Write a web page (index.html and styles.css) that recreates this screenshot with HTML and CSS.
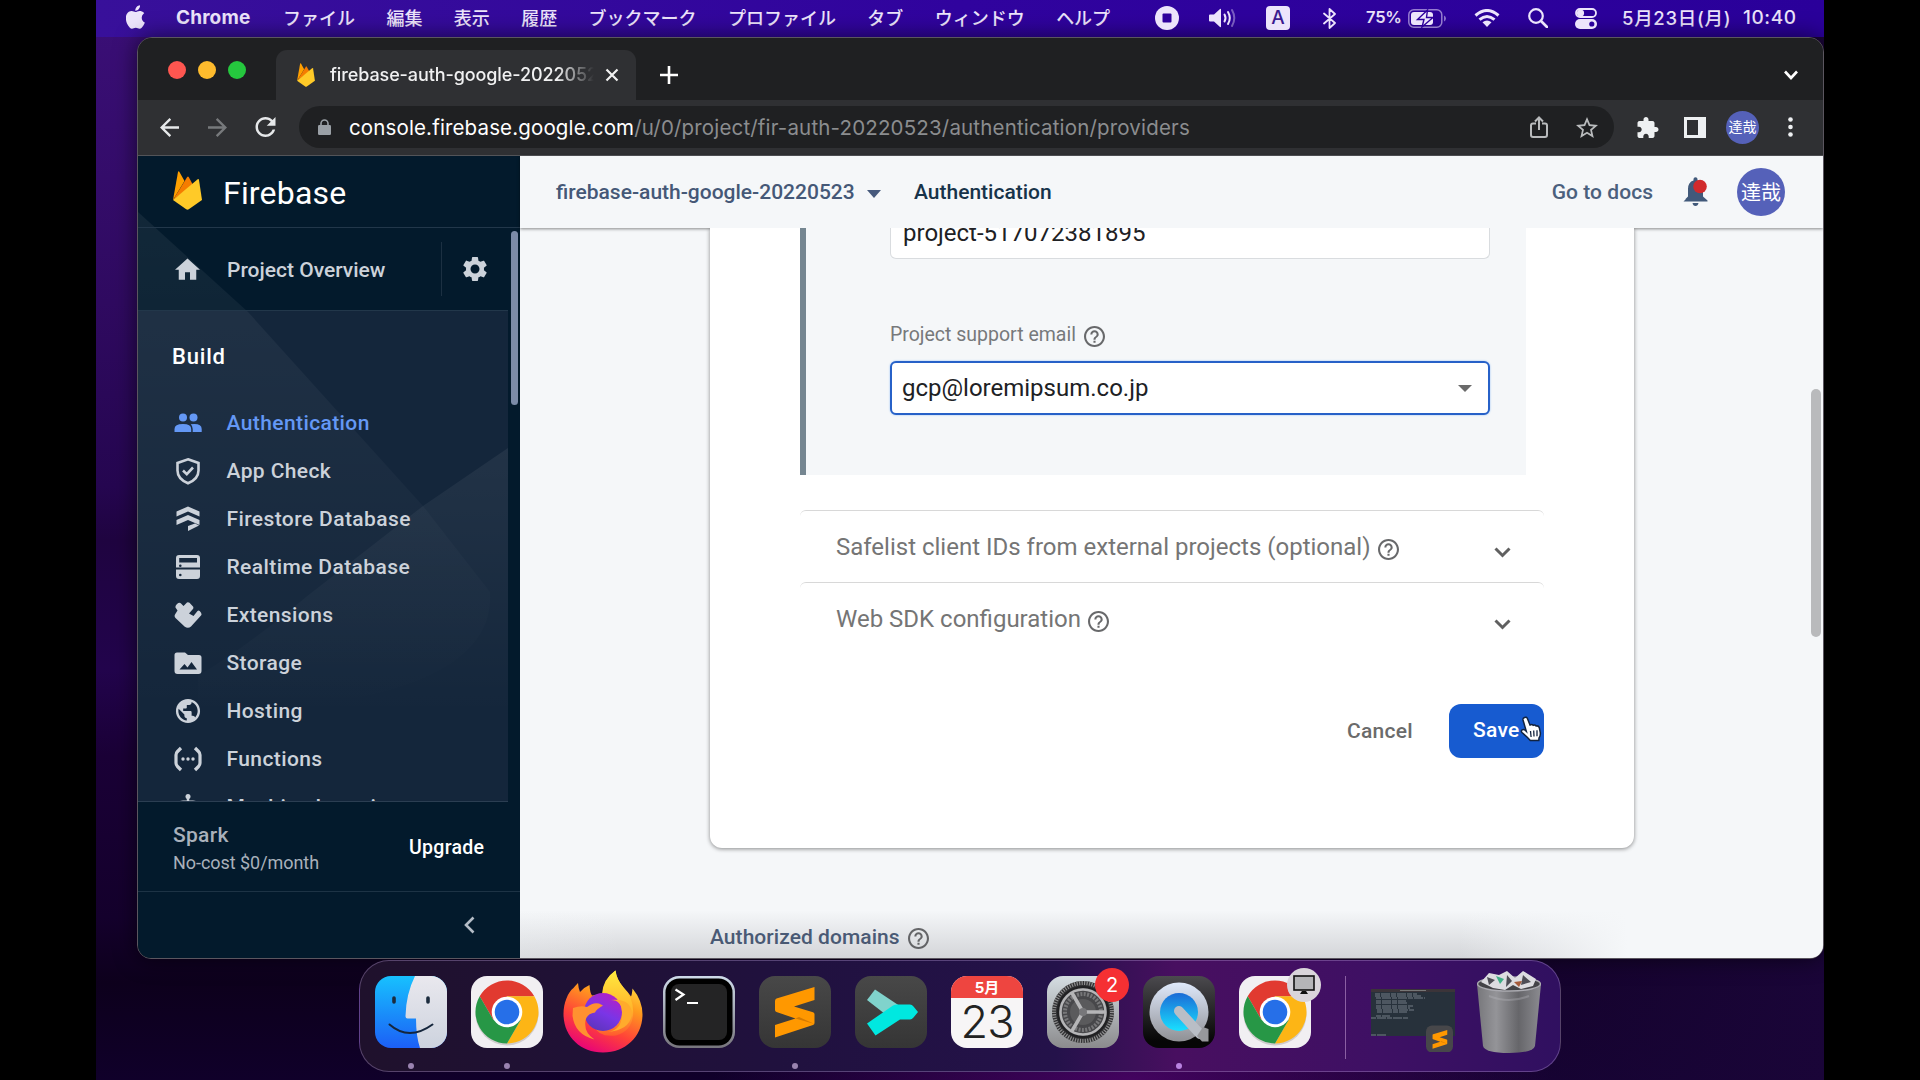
FILE: index.html
```html
<!DOCTYPE html>
<html lang="ja">
<head>
<meta charset="utf-8">
<title>Firebase console</title>
<link rel="stylesheet" href="styles.css">
</head>
<body>
<svg class="defs" width="0" height="0" aria-hidden="true">
  <defs>
    <linearGradient id="g-finder" x1="0" y1="0" x2="0" y2="1"><stop offset="0" stop-color="#17c1fe"/><stop offset="1" stop-color="#1c5ff6"/></linearGradient>
    <linearGradient id="g-finder-r" x1="0" y1="0" x2="0" y2="1"><stop offset="0" stop-color="#e9e8ee"/><stop offset="1" stop-color="#cdd3de"/></linearGradient>
    <linearGradient id="g-ff" x1=".75" y1="0" x2=".3" y2="1"><stop offset="0" stop-color="#fff04a"/><stop offset=".35" stop-color="#ff9a1e"/><stop offset=".68" stop-color="#ff4039"/><stop offset="1" stop-color="#e6007c"/></linearGradient>
    <linearGradient id="g-ff2" x1="0" y1="0" x2="0" y2="1"><stop offset="0" stop-color="#ffea3f"/><stop offset=".6" stop-color="#ffb52b"/><stop offset="1" stop-color="#ff5a2e"/></linearGradient>
    <linearGradient id="g-ff3" x1=".7" y1="0" x2=".2" y2="1"><stop offset="0" stop-color="#b420c8"/><stop offset=".5" stop-color="#7a35e6"/><stop offset="1" stop-color="#5a35b8"/></linearGradient>
    <linearGradient id="g-term" x1="0" y1="0" x2="0" y2="1"><stop offset="0" stop-color="#cfdcea"/><stop offset="1" stop-color="#77757c"/></linearGradient>
    <linearGradient id="g-dark" x1="0" y1="0" x2="0" y2="1"><stop offset="0" stop-color="#484848"/><stop offset="1" stop-color="#353535"/></linearGradient>
    <linearGradient id="g-pref" x1="0" y1="0" x2="0" y2="1"><stop offset="0" stop-color="#d5dde2"/><stop offset="1" stop-color="#8b8b8d"/></linearGradient>
    <linearGradient id="g-qt" x1="0" y1="0" x2="0" y2="1"><stop offset="0" stop-color="#4b4a4e"/><stop offset=".9" stop-color="#060606"/></linearGradient>
    <linearGradient id="g-qtr" x1="0" y1="0" x2="0" y2="1"><stop offset="0" stop-color="#dfe9fb"/><stop offset="1" stop-color="#8f9094"/></linearGradient>
    <linearGradient id="g-qtb" x1="0" y1="0" x2="0" y2="1"><stop offset="0" stop-color="#1b6bd6"/><stop offset="1" stop-color="#19e0ff"/></linearGradient>
    <linearGradient id="g-can" x1="0" y1="0" x2="1" y2="0"><stop offset="0" stop-color="#77777b"/><stop offset=".3" stop-color="#949498"/><stop offset=".65" stop-color="#66666a"/><stop offset="1" stop-color="#8b8b90"/></linearGradient>
    <symbol id="i-help" viewBox="2 2 20 20"><path d="M11 18h2v-2h-2v2zm1-16C6.48 2 2 6.48 2 12s4.48 10 10 10 10-4.48 10-10S17.52 2 12 2zm0 18c-4.41 0-8-3.59-8-8s3.59-8 8-8 8 3.59 8 8-3.59 8-8 8zm0-14c-2.21 0-4 1.79-4 4h2c0-1.1.9-2 2-2s2 .9 2 2c0 2-3 1.75-3 5h2c0-2.25 3-2.5 3-5 0-2.21-1.79-4-4-4z"/></symbol>
    <symbol id="i-down" viewBox="0 0 17 11"><path d="M1.5 1.5 8.500 8.500l7-7" fill="none" stroke="currentColor" stroke-width="3"/></symbol>
    <symbol id="i-firebase" viewBox="0 0 29 39">
      <path d="M0 29 5 .9Q5.500-.4 6.300.8L11.500 10z" fill="#ffa000"/>
      <path d="M0 29 14.200 6q.8-1.200 1.500 0L20 14z" fill="#f57c00"/>
      <path d="M0 29 24.400 8.500q1.300-1 1.600.6L29 29 15.800 38.300q-1.300.8-2.600 0z" fill="#ffca28"/>
    </symbol>
    <symbol id="i-chrome" viewBox="0 0 72 72">
      <rect width="72" height="72" rx="16" fill="#f1eff2"/>
      <circle cx="36" cy="38" r="31.500" fill="#b9b4b4" opacity=".6"/>
      <path d="M8.700 20.250a31.500 31.500 0 0 1 54.600 0H36L22.400 43.900z" fill="#e13a30"/>
      <path d="M63.300 20.250A31.500 31.500 0 0 1 36 67.500L49.600 43.900 36 36V20.250z" fill="#fdb515"/>
      <path d="M36 67.500A31.500 31.500 0 0 1 8.700 20.250L22.400 43.900 36 40l13.600 3.900z" fill="#279746"/>
      <circle cx="36" cy="36" r="15.300" fill="#fff"/><circle cx="36" cy="36" r="12.300" fill="#266fe8"/>
    </symbol>
    <symbol id="i-sublime" viewBox="0 0 40 51"><path d="M0 14Q0 12 1.500 11.500L39.500 0V13L19 19.500l19 5.800q1.500.5 1.500 2V36q0 1.500-1.500 2L0 50.500V38l20.500-6.500L1.500 25Q0 24.500 0 23z" fill="#ff9800"/><path d="M20.500 31.500 39.500 37 24 30z" fill="#d57a00"/></symbol>
  </defs>
</svg>

<div class="screen">
  <header class="menubar">
    <svg class="apple" viewBox="4 2 16.200 20"><path fill="currentColor" d="M18.710 19.500c-.83 1.240-1.710 2.450-3.050 2.470-1.340.03-1.770-.79-3.290-.79-1.530 0-2 .77-3.270.82-1.310.05-2.300-1.320-3.140-2.530C4.250 17 2.940 12.450 4.700 9.390c.87-1.520 2.430-2.480 4.120-2.510 1.280-.02 2.500.87 3.290.87.78 0 2.260-1.070 3.810-.91.65.03 2.470.26 3.640 1.980-.09.06-2.170 1.280-2.150 3.810.03 3.020 2.650 4.030 2.680 4.040-.03.07-.42 1.440-1.380 2.830M13 3.500c.73-.83 1.940-1.460 2.940-1.500.13 1.170-.34 2.350-1.040 3.190-.69.85-1.830 1.510-2.950 1.420-.15-1.150.41-2.350 1.050-3.110z"/></svg>
    <b class="appname">Chrome</b>
    <nav class="menus"><span>ファイル</span><span>編集</span><span>表示</span><span>履歴</span><span>ブックマーク</span><span>プロファイル</span><span>タブ</span><span>ウィンドウ</span><span>ヘルプ</span></nav>
    <div class="status">
      <svg class="s-rec" viewBox="0 0 24 24"><circle cx="12" cy="12" r="12" fill="currentColor"/><rect x="7.500" y="7.500" width="9" height="9" rx="1" fill="#2e009c"/></svg>
      <svg class="s-vol" viewBox="0 0 28 20"><path d="M0 7.500Q0 6.500 1 6.500H5L11 1q1-.6 1 .5v17q0 1-1 .5L5 13.500H1q-1 0-1-1z" fill="currentColor"/><path d="M15.500 6.500q2 3.500 0 7M19 4q3.600 6 0 12" fill="none" stroke="currentColor" stroke-width="2" stroke-linecap="round"/><path d="M23 2q4.600 8 0 16" fill="none" stroke="currentColor" stroke-width="2" stroke-linecap="round" opacity=".4"/></svg>
      <span class="s-ime">A</span>
      <svg class="s-bt" viewBox="0 0 13 21"><path d="M1 5.500 12 15 6.500 20V1L12 6 1 15.500" fill="none" stroke="currentColor" stroke-width="1.800" stroke-linejoin="round" stroke-linecap="round"/></svg>
      <span class="s-pct">75%</span>
      <svg class="s-bat" viewBox="0 0 38 19"><rect x=".8" y=".8" width="33" height="17.400" rx="5" fill="none" stroke="currentColor" stroke-width="1.500" opacity=".55"/><path d="M36 6.500q2 .8 2 3t-2 3z" fill="currentColor" opacity=".5"/><rect x="3" y="3" width="22" height="13" rx="3" fill="currentColor"/><path d="M19.500 1 9.500 10.500h6.500l-2 7.500L25 8.500h-6.500z" fill="currentColor" stroke="#2e009c" stroke-width="1.400"/></svg>
      <svg class="s-wifi" viewBox="0 0 26 18"><path d="M1.500 6.500q11.500-10 23 0M5.500 10.700q7.500-6.500 15 0" fill="none" stroke="currentColor" stroke-width="3"/><path d="M8.500 13.300q4.500-3.600 9 0L13 18z" fill="currentColor"/></svg>
      <svg class="s-find" viewBox="0 0 20 20"><circle cx="8" cy="8" r="6.800" fill="none" stroke="currentColor" stroke-width="2.200"/><path d="m13 13 6 6" stroke="currentColor" stroke-width="2.600" stroke-linecap="round"/></svg>
      <svg class="s-cc" viewBox="0 0 22 21"><rect x="1" y="1" width="20" height="8" rx="4" fill="none" stroke="currentColor" stroke-width="1.800"/><circle cx="5.500" cy="5" r="3.600" fill="currentColor"/><rect y="11" width="22" height="10" rx="5" fill="currentColor"/><circle cx="16.800" cy="16" r="2.600" fill="#2b009c"/></svg>
      <span class="s-date">5月23日(月)</span><span class="s-time">10:40</span>
    </div>
  </header>

  <main class="window">
    <div class="tabstrip">
      <div class="lights"><i class="red"></i><i class="amber"></i><i class="green"></i></div>
      <div class="tab">
        <svg class="fav"><use href="#i-firebase"/></svg>
        <span class="tab-title">firebase-auth-google-20220523</span>
        <svg class="close" viewBox="0 0 14 14"><path d="m1.500 1.500 11 11m0-11-11 11" stroke="#f1f1f1" stroke-width="2.200"/></svg>
      </div>
      <svg class="plus" viewBox="0 0 18 18"><path d="M9 0v18M0 9h18" stroke="#fff" stroke-width="2.600"/></svg>
      <svg class="tabs-more" viewBox="0 0 14 10"><path d="m1 1.500 6 6.500 6-6.500" fill="none" stroke="#fff" stroke-width="2.600"/></svg>
    </div>
    <div class="toolbar">
      <svg class="t-back" viewBox="4 4 16 16"><path fill="#e6e8ea" d="M20 11H7.830l5.590-5.590L12 4l-8 8 8 8 1.410-1.410L7.830 13H20v-2z"/></svg>
      <svg class="t-fwd" viewBox="4 4 16 16"><path fill="#77797c" d="m12 4-1.410 1.410L16.170 11H4v2h12.170l-5.580 5.590L12 20l8-8z"/></svg>
      <svg class="t-reload" viewBox="4 4 16 16"><path fill="#e6e8ea" d="M17.650 6.350C16.200 4.900 14.210 4 12 4c-4.420 0-7.990 3.580-7.990 8s3.570 8 7.990 8c3.730 0 6.840-2.550 7.730-6h-2.080c-.82 2.330-3.040 4-5.650 4-3.310 0-6-2.690-6-6s2.690-6 6-6c1.660 0 3.140.69 4.220 1.780L13 11h7V4l-2.350 2.350z"/></svg>
      <div class="omnibox">
        <svg class="lock" viewBox="0 0 13 16"><path d="M3 7V4.500a3.500 3.500 0 0 1 7 0V7" fill="none" stroke="#9aa0a6" stroke-width="1.600"/><rect y="6" width="13" height="10" rx="1.300" fill="#9aa0a6"/></svg>
        <span class="url"><span class="host">console.firebase.google.com</span><span class="path">/u/0/project/fir-auth-20220523/authentication/providers</span></span>
        <svg class="share" viewBox="0 0 18 22"><path d="M6 7.500H3q-2 0-2 2V19q0 2 2 2h12q2 0 2-2V9.500q0-2-2-2h-3M9 14V1.500M5 5.500l4-4 4 4" fill="none" stroke="#b9bbbd" stroke-width="2"/></svg>
        <svg class="star" viewBox="2 2 20 19"><path fill="#b9bbbd" d="M22 9.240l-7.190-.62L12 2 9.190 8.630 2 9.240l5.460 4.730L5.820 21 12 17.270 18.180 21l-1.630-7.030L22 9.240zM12 15.400l-3.760 2.270 1-4.280-3.320-2.880 4.380-.38L12 6.100l1.710 4.040 4.380.38-3.320 2.880 1 4.280L12 15.400z"/></svg>
      </div>
      <svg class="puzzle" viewBox="2 1 21 21"><path fill="#eef0f2" d="M20.500 11H19V7c0-1.100-.9-2-2-2h-4V3.500C13 2.120 11.880 1 10.500 1S8 2.120 8 3.500V5H4c-1.100 0-1.990.9-1.990 2v3.800H3.500c1.490 0 2.700 1.210 2.700 2.700s-1.210 2.700-2.700 2.700H2V20c0 1.100.9 2 2 2h3.800v-1.500c0-1.490 1.210-2.700 2.700-2.700 1.490 0 2.700 1.210 2.700 2.700V22H17c1.100 0 2-.9 2-2v-4h1.500c1.380 0 2.500-1.120 2.500-2.500S21.880 11 20.500 11z"/></svg>
      <svg class="panel" viewBox="0 0 22 21"><path fill="#eef0f2" fill-rule="evenodd" d="M0 0h22v21H0zM3 3v15h11V3z"/></svg>
      <span class="avatar small">達哉</span>
      <svg class="dots" viewBox="0 0 5 20"><g fill="#eef0f2"><circle cx="2.500" cy="2.500" r="2.300"/><circle cx="2.500" cy="10" r="2.300"/><circle cx="2.500" cy="17.500" r="2.300"/></g></svg>
    </div>

    <div class="page">
      <aside class="sidebar">
        <svg class="facets" viewBox="0 0 382 802" preserveAspectRatio="none">
          <defs><linearGradient id="g-facet" x1="0" y1="0" x2="0" y2="1"><stop offset="0" stop-color="#fff" stop-opacity=".06"/><stop offset="1" stop-color="#fff" stop-opacity="0"/></linearGradient></defs>
          <path d="M0 155H370V645H0z" fill="#14263b"/>
          <path d="M0 56 110 156 285 350 352 436Q360 560 0 560z" fill="url(#g-facet)"/>
          <path d="M370 292 285 350 168 441Q110 490 60 520V560H370z" fill="url(#g-facet)"/>
        </svg>
        <div class="brand"><svg class="flame"><use href="#i-firebase"/></svg><span>Firebase</span></div>
        <div class="overview">
          <svg class="home" viewBox="2 3 20 17"><path d="M10 20v-6h4v6h5v-8h3L12 3 2 12h3v8z"/></svg>
          <span>Project Overview</span>
          <i class="vline"></i>
          <svg class="gear" viewBox="2.500 2.400 19 19.200"><path d="M19.140 12.940c.04-.3.06-.61.06-.94 0-.32-.02-.64-.07-.94l2.030-1.580c.18-.14.23-.41.12-.61l-1.920-3.320c-.12-.22-.37-.29-.59-.22l-2.390.96c-.5-.38-1.030-.7-1.620-.94l-.36-2.540c-.04-.24-.24-.41-.48-.41h-3.840c-.24 0-.43.17-.47.41l-.36 2.540c-.59.24-1.130.57-1.620.94l-2.390-.96c-.22-.08-.47 0-.59.22L2.740 8.870c-.12.21-.08.47.12.61l2.030 1.580c-.05.3-.09.63-.09.94s.02.64.07.94l-2.030 1.580c-.18.14-.23.41-.12.61l1.920 3.320c.12.22.37.29.59.22l2.390-.96c.5.38 1.030.7 1.620.94l.36 2.540c.05.24.24.41.48.41h3.840c.24 0 .44-.17.47-.41l.36-2.540c.59-.24 1.130-.56 1.620-.94l2.390.96c.22.08.47 0 .59-.22l1.920-3.320c.12-.22.07-.47-.12-.61l-2.010-1.580zM12 15.600c-1.980 0-3.600-1.620-3.600-3.600s1.620-3.600 3.600-3.600 3.600 1.620 3.600 3.600-1.620 3.600-3.600 3.600z"/></svg>
        </div>
        <div class="navlist">
          <h2>Build</h2>
          <a class="active"><svg viewBox="0 0 28 28"><g><circle cx="9" cy="8.500" r="4"/><circle cx="19.500" cy="8.500" r="4"/><path d="M.5 23v-3q0-5 8.500-5 8.200 0 8.200 5v3zM18.700 23v-3q0-3-2-4.700 11-1.300 11 4.700v3z"/></g></svg><span>Authentication</span></a>
          <a><svg viewBox="0 0 28 28"><path d="M14 2.300 24.500 6v7.500Q24.500 22 14 26.300 3.500 22 3.500 13.500V6z" fill="none" stroke="currentColor" stroke-width="2.600"/><path d="m9 13.500 3.800 3.600L19 10.500" fill="none" stroke="currentColor" stroke-width="2.600"/></svg><span>App Check</span></a>
          <a><svg viewBox="0 0 28 28"><path d="M14 1.500 25.500 6.500V11.500L14 6.500 2.500 11.500V6.500zM14 10 25.500 15v5L14 15 2.500 20V15zM14 21l7-2.500 4 2L14 26z"/></svg><span>Firestore Database</span></a>
          <a><svg viewBox="0 0 28 28"><path fill-rule="evenodd" d="M5 2h18q3 0 3 3V14.500H2V5q0-3 3-3zM5.200 5v4.500H23V5zM5 12.800a1.100 1.100 0 1 0 2.600 0 1.100 1.100 0 1 0-2.600 0zM2 16.500H26V23q0 3-3 3H5q-3 0-3-3zM5 22a1.300 1.300 0 1 0 2.600 0A1.300 1.300 0 1 0 5 22z"/></svg><span>Realtime Database</span></a>
          <a><svg viewBox="0 0 28 28"><path d="M1 13.500 3.500 9.500 1.500 6.500Q1 5 3 3 5.500 1 7 2.500L9.500 5 12 2.500Q13.500.5 15.500 1.800L19 5.500q1 1.500-.5 3L15 12.500 19.500 15l4-5q1-.8 2.200 0Q28.500 13 27 14.500L17 25.500q-3 2.500-6.500 0L1.500 17Q0 15.500 1 13.500z"/></svg><span>Extensions</span></a>
          <a><svg viewBox="0 0 28 28"><path fill-rule="evenodd" d="M3 3.500H11L14 6H25q2.500 0 2.500 2.500V22Q27.500 25 24.500 25H3.500Q.5 25 .5 22V6Q.5 3.500 3 3.500zM5.500 20.500H23L17.500 13l-4 5.500L10.500 15z"/></svg><span>Storage</span></a>
          <a><svg viewBox=".4 .4 23.200 23.200"><path d="M12 2C6.480 2 2 6.480 2 12s4.480 10 10 10 10-4.480 10-10S17.520 2 12 2zm-1 17.930c-3.950-.49-7-3.850-7-7.930 0-.62.08-1.210.21-1.790L9 15v1c0 1.100.9 2 2 2v1.930zm6.900-2.540c-.26-.81-1-1.390-1.900-1.390h-1v-3c0-.55-.45-1-1-1H8v-2h2c.55 0 1-.45 1-1V7h2c1.100 0 2-.9 2-2v-.41c2.930 1.190 5 4.060 5 7.410 0 2.080-.8 3.970-2.100 5.390z"/></svg><span>Hosting</span></a>
          <a><svg viewBox="0 0 28 28"><path d="M7 3 3.500 6.500Q2 8 2 10v8q0 2 1.500 3.500L7 25M21 3l3.500 3.500Q26 8 26 10v8q0 2-1.500 3.500L21 25" fill="none" stroke="currentColor" stroke-width="3.200"/><circle cx="9" cy="14" r="1.700"/><circle cx="14" cy="14" r="1.700"/><circle cx="19" cy="14" r="1.700"/></svg><span>Functions</span></a>
          <a><svg viewBox="0 0 28 28"><circle cx="14" cy="3.500" r="2.500"/><path d="M12.800 4h2.400v6h-2.400zM3 12q1-4.500 6-4.500H19q5 0 6 4.500v10H3z"/></svg><span>Machine Learning</span></a>
        </div>
        <div class="plan"><div><p class="plan-name">Spark</p><p class="plan-cost">No-cost $0/month</p></div><b>Upgrade</b></div>
        <div class="collapse"><svg viewBox="0 0 11 18"><path d="M9.500 1.500 2 9l7.500 7.500" fill="none" stroke="#b4bcc6" stroke-width="2.600"/></svg></div>
        <i class="side-scroll"></i>
      </aside>

      <section class="content">
        <div class="crumbs">
          <span class="project">firebase-auth-google-20220523</span>
          <svg class="caret" viewBox="0 0 14 8"><path d="M0 0h14L7 8z" fill="#46597c"/></svg>
          <span class="current">Authentication</span>
          <span class="docs">Go to docs</span>
          <svg class="bell" viewBox="0 0 25 30"><path d="M2.500 24.500V22L5 19.500V12q0-7 5.500-8.500V2q0-1.800 2-1.800t2 1.800v1.500Q20 5 20 12v7.500l4.500 4v1H.5l2-2zM9.500 26h6q-.5 3-3 3t-3-3z" fill="#41597a"/><circle cx="17" cy="9.500" r="6.800" fill="#d12a2c"/></svg>
          <span class="avatar">達哉</span>
        </div>
        <div class="scroller">
          <div class="card">
            <div class="inner">
              <div class="field plain">project-517072381895</div>
              <div class="label">Project support email <svg class="help"><use href="#i-help"/></svg></div>
              <div class="field focus"><span>gcp@loremipsum.co.jp</span><svg class="caret" viewBox="0 0 14 7"><path d="M0 0h14L7 7z" fill="#6a6a6a"/></svg></div>
            </div>
            <div class="accordion"><span class="safelist">Safelist client IDs from external projects (optional)</span><svg class="help"><use href="#i-help"/></svg><svg class="down"><use href="#i-down"/></svg></div>
            <div class="accordion"><span class="websdk">Web SDK configuration</span><svg class="help"><use href="#i-help"/></svg><svg class="down"><use href="#i-down"/></svg></div>
            <div class="actions"><span class="cancel">Cancel</span><span class="save">Save
              <svg class="cursor" viewBox="0 0 22 26"><path d="M4.500 1.500q2-1 3 1.200L10 9q2-1.200 3.200.3 1.700-.8 2.900.7 2.300-.6 3.200 1.600l1 5q.4 3-1.300 5.400l-.2 2.500h-8.500L7.500 21.500 2 16.500q-1.300-1.600.2-2.600t3 .4l1.100 1L3 4q-.3-1.700 1.500-2.500z" fill="#fff" stroke="#12233f" stroke-width="1.500"/><path d="m10.500 15 .6 6M13.700 14.500l.3 6M17 14.200v6" stroke="#12233f" stroke-width="1.300"/></svg></span></div>
          </div>
          <div class="domains">Authorized domains <svg class="help"><use href="#i-help"/></svg></div>
          <i class="page-scroll"></i>
        </div>
      </section>
    </div>
  </main>

  <footer class="dock">
    <div class="app running"><svg viewBox="0 0 72 72"><clipPath id="c-f"><rect width="72" height="72" rx="16"/></clipPath><g clip-path="url(#c-f)"><path fill="url(#g-finder)" d="M0 0h72v72H0z"/><path fill="url(#g-finder-r)" d="M40 0Q31 18 30.500 40q0 2.500 2 2.500H41Q41 60 45 72H72V0z"/><path d="M14.500 48.500Q34 65.500 57.500 48.500" fill="none" stroke="#15263c" stroke-width="2" stroke-linecap="round"/><path d="M19 22v4M53 22v4" stroke="#1b2b3d" stroke-width="3.600" stroke-linecap="round"/></g></svg></div>
    <div class="app running"><svg><use href="#i-chrome"/></svg></div>
    <div class="app"><svg class="firefox" viewBox="0 0 80 83"><path d="M40 82.500C17 82.500.5 66 .5 44 .5 33 5 22 10.500 18q2-2.500 4.500-5 .5 6 2 9 4.500-5 9.500-7 .5 8 2.500 10.500L40 24q0-14 12.500-23.500 1 9 8 17 4 4 7.500 9 1-2 1.500-8 10 12 10 26C79.500 66 63 82.500 40 82.500z" fill="url(#g-ff)"/><path d="M39 24Q40 9 52.500.5q1 9 8 17 11 12 9.500 28-2 16-17 20-18 2-22-10l20-8z" fill="url(#g-ff2)"/><circle cx="40" cy="42" r="19" fill="url(#g-ff3)"/><path d="M10 38q8-3 14-1 6-5 12-3.500l4 2q-7 4-8 7-8 1-9.500 8-2 12 9 19-20-5-22-24z" fill="#ff9130"/><path d="M48 30q12 0 11 16-1 14-14 16 22-2 24-18Q68 28 48 30z" fill="#ffab2c"/></svg></div>
    <div class="app"><svg viewBox="0 0 72 72"><rect width="72" height="72" rx="16" fill="url(#g-term)"/><rect x="2.500" y="2.500" width="67" height="67" rx="14" fill="#000"/><rect x="8" y="8" width="56" height="56" rx="8" fill="#242425"/><path d="m12.500 13.500 8 5-8 5.500M24 27h11" fill="none" stroke="#fff" stroke-width="2.200"/></svg></div>
    <div class="app running"><svg viewBox="0 0 72 72"><rect width="72" height="72" rx="16" fill="url(#g-dark)"/><use href="#i-sublime" x="16" y="11" width="40" height="51"/></svg></div>
    <div class="app"><svg viewBox="0 0 72 72"><rect width="72" height="72" rx="16" fill="url(#g-dark)"/><path d="m20 13.500 24 16L30 38 12 24z" fill="#80d3cc"/><path d="M12 47.500 38 29.500Q40 28.500 42 28.500H55Q57 28.500 58.500 30.500L63 36 58.500 41.500Q57 43.500 55 43.500H45L20.500 59.500z" fill="#00e8e0"/></svg></div>
    <div class="app calendar"><span class="month">5月</span><span class="day">23</span></div>
    <div class="app"><svg viewBox="0 0 72 72"><rect width="72" height="72" rx="16" fill="url(#g-pref)"/><circle cx="36" cy="36" r="31" fill="#303032"/><circle cx="36" cy="36" r="29" fill="none" stroke="#8f8f90" stroke-width="4" stroke-dasharray="1.200 1.300"/><circle cx="36" cy="36" r="25" fill="#47474a" stroke="#202022" stroke-width="2"/><circle cx="36" cy="36" r="18" fill="none" stroke="#777779" stroke-width="4" stroke-dasharray="2 1.400"/><circle cx="36" cy="36" r="13" fill="#5a5a5c"/><circle cx="36" cy="36" r="22.500" fill="none" stroke="#b5b5b7" stroke-width="2.500"/><path d="M36 36H58M36 36 25 17M36 36 25 55" stroke="#b5b5b7" stroke-width="3.500"/><circle cx="36" cy="36" r="4" fill="#77777a"/></svg><span class="badge">2</span></div>
    <div class="app running bright"><svg viewBox="0 0 72 72"><rect width="72" height="72" rx="16" fill="url(#g-qt)"/><circle cx="36" cy="36" r="29.500" fill="url(#g-qtr)"/><circle cx="36" cy="36" r="19" fill="url(#g-qtb)"/><path d="M36 35 57 58" stroke="#b9bec6" stroke-width="10" stroke-linecap="round"/><path d="m54 60 5 5.500h6.500V53L60 51z" fill="#97989c"/></svg></div>
    <div class="app"><svg><use href="#i-chrome"/></svg><span class="badge screen-badge"><svg viewBox="0 0 22 20"><rect x="1" y="1" width="20" height="14" fill="#b5b5b8" stroke="#111" stroke-width="1.600"/><path d="M9 16h4l2 3H7z" fill="#111"/></svg></span></div>
    <i class="divider"></i>
    <div class="mini"><svg viewBox="0 0 84 63"><path d="M0 0h84v47H0z" fill="#27313b"/><path d="M0 0h84v3H0z" fill="#3b3439"/><path d="M29 1.500h26" stroke="#777" stroke-width="1"/><g stroke="#7d8790" stroke-width=".9" stroke-dasharray="5 1 9 1"><path d="M4 5h42M4 7h46M5 9h49M5 12h30M5 14h32M5 17h38M5 19h34M6 21h38M6 23h30M5 27h14M0 29h37M0 46h16"/></g><rect x="55" y="36.500" width="27" height="27" rx="6" fill="#47474a"/><use href="#i-sublime" x="61" y="41" width="16" height="19"/></svg></div>
    <div class="trash"><svg viewBox="0 0 64 84"><path d="M0 14h64L58 76Q56 83 32 83T6 76z" fill="url(#g-can)"/><ellipse cx="32" cy="14" rx="31.500" ry="7" fill="#434347" stroke="#aaaab0" stroke-width="1.500"/><path d="m4 12 8-9 10 2L30 1l8 7 8-7 13 8-3 7-12 3-8-4-8 5-12-2z" fill="#dcdce0"/><path d="m10 7 8 3-6 5zM30 5l5 6-6 6zM46 5l8 7-10 3z" fill="#4d4d55"/><path d="m19 6 8 3-4 5z" fill="#3fae86"/><path d="m37 12 8-1-3 6z" fill="#a45a3a"/><path d="M12 26q20 8 40 0" fill="none" stroke="#b8b8bd" stroke-width="2" opacity=".35"/></svg></div>
  </footer>
</div>
</body>
</html>
```
FILE: styles.css
```css
* { box-sizing: border-box; }
body { margin: 0; background: #000; font-family: Roboto, "Noto Sans CJK JP", sans-serif; overflow: hidden; }
svg { display: block; flex: none; fill: currentColor; }
.defs { position: absolute; }

.screen {
  width: 1728px; height: 1080px; margin-left: 96px; overflow: hidden;
  display: flex; flex-direction: column; align-items: center;
  background:
    radial-gradient(ellipse 420px 160px at 60% 100%, #43045f 0, rgba(67, 4, 95, 0) 100%),
    linear-gradient(90deg, rgba(24, 4, 54, 0) 60%, #1a0538 100%),
    linear-gradient(180deg, #3b0f78 0, #2f0a60 28%, #250650 45%, #1f0440 50%, #22044c 62%, #1a0036 70%, #14002c 85%, #0d001c 91%, #10002a 100%);
}

/* macOS menu bar */
.menubar { align-self: stretch; height: 37px; flex: none; display: flex; align-items: center; padding: 0 0 3px 30px; background: linear-gradient(90deg, #38109a, #30039e 50%, #2a009a); color: #ece4fb; font-size: 18px; font-family: Inter, "Noto Sans CJK JP", sans-serif; font-weight: 500; }
.apple { width: 19px; height: 24px; margin-right: 31px; }
.appname { width: 107px; font-weight: 700; font-size: 19px; letter-spacing: .15px; }
.menus { display: flex; gap: 31.400px; white-space: nowrap; width: 872px; flex: none; font-family: "Noto Sans CJK JP", sans-serif; }
.status { display: flex; align-items: center; white-space: nowrap; }
.status svg, .s-ime { position: relative; top: 1px; }
.s-rec { width: 24px; height: 24px; margin-right: 30px; }
.s-vol { width: 28px; height: 20px; margin-right: 29px; }
.s-ime { width: 24px; height: 24px; border-radius: 4px; background: #ece4fb; color: #3a1a90; text-align: center; font-size: 19px; line-height: 24px; margin-right: 33px; }
.s-bt { width: 13px; height: 21px; margin-right: 30px; }
.s-pct { width: 42px; font-size: 16.500px; letter-spacing: -.2px; font-weight: 600; }
.s-bat { width: 38px; height: 19px; margin-right: 28px; }
.s-wifi { width: 26px; height: 18px; margin-right: 28px; }
.s-find { width: 20px; height: 20px; margin-right: 27px; }
.s-cc { width: 22px; height: 21px; margin-right: 25px; }
.s-date { width: 121px; font-size: 18.500px; letter-spacing: .7px; }
.s-time { font-size: 19px; letter-spacing: .6px; }

/* browser window */
.window { align-self: stretch; margin: 0 0 0 41px; height: 922px; flex: none; display: flex; flex-direction: column; border: 1px solid #5b565f; border-radius: 15px 15px 14px 14px; overflow: hidden; background: #202124; box-shadow: 0 0 22px rgba(0, 0, 0, .6); }
.tabstrip { height: 62px; flex: none; display: flex; align-items: center; background: #1f2022; padding-right: 25px; }
.lights { display: flex; gap: 12px; width: 138px; padding-left: 30px; }
.lights i { width: 18px; height: 18px; border-radius: 50%; margin-top: 2px; }
.red { background: #fe5650; }
.amber { background: #febb2d; }
.green { background: #25c73e; }
.tab { width: 360px; height: 50px; align-self: flex-end; background: #2f3033; border-radius: 11px 11px 0 0; display: flex; align-items: center; padding-left: 21px; }
.fav { width: 18px; height: 24px; margin-right: 15px; }
.tab-title { width: 264px; overflow: hidden; white-space: nowrap; color: #f1f1f2; font: 500 18px Inter, sans-serif; letter-spacing: -.1px; -webkit-mask-image: linear-gradient(90deg, #000 86%, transparent); mask-image: linear-gradient(90deg, #000 86%, transparent); margin-right: 11px; position: relative; top: -1px; }
.close { width: 14px; height: 14px; }
.plus { width: 18px; height: 18px; margin: 12px 0 0 24px; }
.tabs-more { width: 14px; height: 10px; margin: 12px 0 0 auto; }
.toolbar { height: 56px; flex: none; display: flex; align-items: center; background: #2f3033; border-bottom: 1px solid #535458; padding: 0 29px 1px 22px; }
.t-back { width: 19px; height: 19px; margin-right: 29px; }
.t-fwd { width: 19px; height: 19px; margin-right: 28px; }
.t-reload { width: 21px; height: 20px; margin-right: 23px; }
.omnibox { width: 1315px; height: 42px; flex: none; border-radius: 21px; background: #1f2022; display: flex; align-items: center; padding: 0 16px 0 19px; }
.lock { width: 13px; height: 16px; margin-right: 18px; }
.url { flex: 1; white-space: nowrap; font-family: Inter, sans-serif; font-size: 20.500px; letter-spacing: .14px; color: #8b8d8f; }
.host { color: #fff; }
.path { letter-spacing: .17px; }
.share { width: 18px; height: 22px; margin-right: 28px; }
.star { width: 22px; height: 21px; }
.puzzle { width: 22px; height: 21px; margin-left: 23px; }
.panel { width: 22px; height: 21px; margin: 0 20px 0 25px; }
.avatar { width: 48px; height: 48px; flex: none; border-radius: 50%; background: #5561b9; color: #fff; text-align: center; font: 400 20px/47px "Noto Sans CJK JP", sans-serif; }
.avatar.small { width: 33px; height: 33px; font-size: 14px; line-height: 31px; }
.dots { width: 5px; height: 20px; margin-left: 29px; }

/* console */
.page { flex: 1; display: flex; min-height: 0; }
.sidebar { position: relative; width: 382px; flex: none; background: #031a2c; color: #ccd2da; display: flex; flex-direction: column; }
.sidebar > div { position: relative; }
.facets { position: absolute; left: 0; top: 0; width: 382px; height: 802px; }
.brand { height: 72px; flex: none; display: flex; align-items: center; padding-left: 35px; gap: 21px; border-bottom: 1px solid #22374a; color: #fff; font-size: 32px; }
.brand span { padding-top: 2px; letter-spacing: .2px; }
.flame { width: 29px; height: 39px; margin-top: -2px; }
.overview { height: 83px; width: 370px; flex: none; display: flex; align-items: center; padding-left: 37px; border-bottom: 1px solid #22374a; font-size: 21px; font-weight: 500; }
.overview span { width: 214px; margin-left: 27px; white-space: nowrap; padding-top: 1px; }
.home { width: 25px; height: 22px; }
.vline { width: 1px; height: 54px; background: #1c3042; margin-right: 21px; }
.gear { width: 24px; height: 24px; }
.navlist { width: 370px; height: 491px; flex: none; overflow: hidden; border-bottom: 1px solid #2b3e52; }
.navlist h2 { margin: 0; height: 88px; padding: 2px 0 0 34px; font-size: 22px; line-height: 87px; font-weight: 500; letter-spacing: .8px; color: #fff; }
.navlist a { height: 48px; display: flex; align-items: center; gap: 25px; padding-left: 35.500px; font-size: 21px; font-weight: 500; letter-spacing: .4px; white-space: nowrap; }
.navlist a svg { width: 28px; height: 28px; }
.navlist .active { color: #6498f5; }
.plan { height: 90px; flex: none; display: flex; align-items: center; padding: 2px 0 0 35px; border-bottom: 1px solid #1d3345; }
.plan > div { width: 236px; }
.plan p { margin: 0; color: #a9b1bb; }
.plan .plan-name { font-size: 21px; line-height: 29px; letter-spacing: .3px; font-weight: 500; }
.plan .plan-cost { font-size: 18px; line-height: 25px; letter-spacing: -.05px; }
.plan b { font-size: 19.500px; font-weight: 500; color: #fff; letter-spacing: .3px; }
.collapse { flex: 1; display: flex; align-items: center; padding-left: 326px; }
.collapse svg { width: 11px; height: 18px; }
.side-scroll { position: absolute; left: 373px; top: 75px; width: 7px; height: 174px; border-radius: 4px; background: #7b8ba8; }

.content { position: relative; flex: 1; display: flex; flex-direction: column; background: #f5f7f9; }
.content::after { content: ""; position: absolute; left: 0; right: 0; bottom: 0; height: 48px; pointer-events: none; background: linear-gradient(90deg, rgba(245, 247, 249, .2) 0, transparent 8%, transparent 72%, #f5f7f9 85%), linear-gradient(rgba(60, 60, 70, 0), rgba(60, 60, 70, .18)); }
.crumbs { height: 72px; flex: none; display: flex; align-items: center; padding: 0 38px 0 36px; font-size: 21px; font-weight: 500; color: #455877; box-shadow: 0 1px 3px rgba(0, 0, 0, .45); position: relative; background: #f5f7f9; white-space: nowrap; }
.project { width: 311px; }
.crumbs .caret { width: 14px; height: 8px; margin: 4px 33px 0 0; }
.current { color: #17334a; }
.docs { margin-left: auto; margin-right: 30px; color: #4b607d; letter-spacing: .05px; }
.bell { width: 25px; height: 30px; margin-right: 29px; }
.scroller { position: relative; flex: 1; padding-left: 190px; overflow: hidden; }
.card { width: 924px; height: 620px; padding: 0 90px; background: #fff; border-radius: 0 0 12px 12px; box-shadow: 0 1px 4px rgba(0, 0, 0, .45); }
.inner { width: 726px; height: 247px; background: #f5f7f9; border-left: 6px solid #758691; padding-left: 84px; margin-bottom: 35px; }
.field { width: 600px; background: #fff; border: 1px solid #d9dcdf; font-size: 24px; color: #202124; white-space: nowrap; }
.plain { height: 31px; border-top: 0; border-radius: 0 0 6px 6px; line-height: 11px; padding-left: 12px; }
.label { display: flex; align-items: center; gap: 8px; height: 24px; margin: 65px 0 13px; font-size: 19.500px; color: #77797b; white-space: nowrap; padding-bottom: 3px; }
.help { width: 21px; height: 21px; color: #68696b; }
.label .help, .domains .help { margin-top: 3px; }
.focus { height: 54px; border: 2.500px solid #2761c8; border-radius: 6px; display: flex; align-items: center; justify-content: space-between; padding: 0 16px 0 10px; box-shadow: 0 0 2px #8ab8f5; }
.focus .caret { width: 14px; height: 7px; }
.accordion { width: 744px; height: 72px; border-top: 1.500px solid #d8d8d8; border-radius: 6px; display: flex; align-items: center; gap: 7px; padding: 1px 33px 0 36px; font-size: 24px; color: #757575; }
.down { width: 17px; height: 11px; margin-left: auto; margin-top: 11px; color: #606060; }
.accordion .help { margin-top: 4px; }
.actions { width: 744px; display: flex; justify-content: flex-end; align-items: center; margin-top: 50px; font-size: 21px; font-weight: 500; }
.cancel { color: #6b6b6b; margin-right: 36px; letter-spacing: .3px; margin-top: -1px; }
.save { position: relative; width: 95px; height: 54px; border-radius: 12px; background: #175bd0; color: #fff; line-height: 53px; padding-left: 24px; letter-spacing: .3px; }
.cursor { position: absolute; left: 71px; top: 12px; width: 22px; height: 26px; }
.domains { display: flex; align-items: center; gap: 8px; height: 30px; margin-top: 74px; font-size: 21px; font-weight: 500; color: #4b5d7a; letter-spacing: .05px; white-space: nowrap; }
.page-scroll { position: absolute; right: 2px; top: 161px; width: 10px; height: 248px; border-radius: 5px; background: #b9babc; }

/* dock */
.dock { width: 1202px; height: 112px; margin-top: 1px; flex: none; display: flex; gap: 24px; padding: 15px 16px 0 15px; border: 1px solid rgba(190, 160, 220, .35); border-radius: 30px; background: linear-gradient(90deg, #1f112c, #20113e 35%, #24124a 58%, #480f60 68%, #3e1064 85%, #301060); }
.app { position: relative; width: 72px; height: 72px; flex: none; }
.app > svg { width: 72px; height: 72px; }
.app > .firefox { width: 80px; height: 83px; margin: -6px -4px; }
.running::after { content: ""; position: absolute; left: 33px; top: 87px; width: 6px; height: 6px; border-radius: 50%; background: #9a83b0; }
.bright::after { background: #b983e0; }
.calendar { border-radius: 16px; overflow: hidden; background: #f7f5f6; text-align: center; color: #222; display: flex; flex-direction: column; }
.month { height: 22px; background: #ee4540; color: #fff; font: 700 15px/24px Inter, "Noto Sans CJK JP", sans-serif; }
.day { font: 300 45px/47px Inter, sans-serif; letter-spacing: -1px; }
.badge { position: absolute; left: 48px; top: -8px; width: 34px; height: 34px; border-radius: 50%; background: #f53033; color: #fff; text-align: center; font: 400 20px/34px Inter, sans-serif; }
.screen-badge { background: #d9d5da; padding: 7px 6px; }
.screen-badge svg { width: 22px; height: 20px; }
.divider { width: 1px; height: 83px; background: #8b5fa3; margin-left: 10px; }
.mini { width: 84px; height: 63px; margin: 13px 0 0 1px; }
.trash { width: 64px; height: 84px; margin: -6px 0 0 -2px; }
```
